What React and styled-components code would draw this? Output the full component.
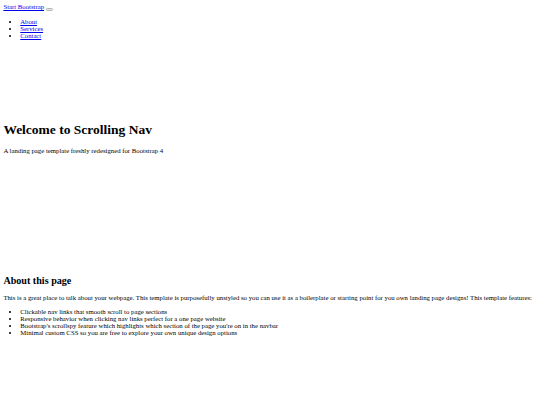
import React from "react";
import styled, { createGlobalStyle } from "styled-components";

const Global = createGlobalStyle`
  html { zoom: 0.421875; }
  body {
    margin: 8px;
    font-family: "Liberation Serif", "Times New Roman", serif;
    font-size: 16px;
    color: #000;
    background: #fff;
  }
`;

const Navbar = styled.nav`
  display: block;
`;

const Brand = styled.a`
  color: #0000ee;
  text-decoration: underline;
  cursor: pointer;
`;

const Toggler = styled.button`
  font: inherit;
  font-size: 13.333px;
  padding: 1px 6px;
  height: 7px;
  width: 18px;
  border: 1px solid #b5b5b5;
  border-radius: 3px;
  background: #e9e9e9;
  margin-left: 4px;
  vertical-align: baseline;
`;

const NavList = styled.ul`
  margin: 16px 0;
  padding-left: 40px;
  list-style: disc;
`;

const NavLink = styled.a`
  color: #0000ee;
  text-decoration: underline;
`;

const Header = styled.header`
  padding: 161px 0 100px;
`;

const Title = styled.h1`
  font-size: 32px;
  font-weight: bold;
  margin: 21.44px 0;
`;

const Text = styled.p`
  margin: 16px 0;
`;

const Section = styled.section`
  padding: 150px 0;
`;

const Heading = styled.h2`
  font-size: 24px;
  font-weight: bold;
  margin: 19.92px 0;
`;

const List = styled.ul`
  margin: 16px 0;
  padding-left: 40px;
  list-style: disc;
`;

const links = ["About", "Services", "Contact"];
const features = [
  "Clickable nav links that smooth scroll to page sections",
  "Responsive behavior when clicking nav links perfect for a one page website",
  "Bootstrap's scrollspy feature which highlights which section of the page you're on in the navbar",
  "Minimal custom CSS so you are free to explore your own unique design options",
];

export default function App() {
  return (
    <>
      <Global />
      <Navbar>
        <Brand href="#page-top">Start Bootstrap</Brand>
        <Toggler type="button"><span /></Toggler>
        <div>
          <NavList>
            {links.map((l) => (
              <li key={l}>
                <NavLink href={`#${l.toLowerCase()}`}>{l}</NavLink>
              </li>
            ))}
          </NavList>
        </div>
      </Navbar>
      <Header>
        <Title>Welcome to Scrolling Nav</Title>
        <Text>A landing page template freshly redesigned for Bootstrap 4</Text>
      </Header>
      <Section id="about">
        <Heading>About this page</Heading>
        <Text>
          This is a great place to talk about your webpage. This template is purposefully unstyled so you can use it as a boilerplate or starting point for you own landing page designs! This template features:
        </Text>
        <List>
          {features.map((f) => (
            <li key={f}>{f}</li>
          ))}
        </List>
      </Section>
    </>
  );
}
